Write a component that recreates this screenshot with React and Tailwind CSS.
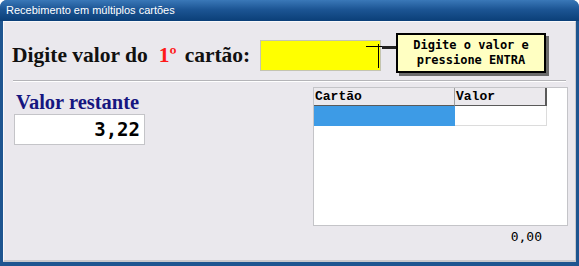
export default function App() {
  return (
    <div className="w-[579px] h-[266px] flex flex-col rounded-t-[7px] bg-[#1e5590] overflow-hidden" style={{ fontFamily: "'Liberation Sans', sans-serif" }}>
      {/* title bar */}
      <div className="h-[21px] shrink-0 flex items-center pl-[6px] text-[11px] text-white bg-[linear-gradient(#3a78b8,#1c5594_45%,#0b3f78)]">
        Recebimento em múltiplos cartões
      </div>

      {/* client area */}
      <div className="flex-1 ml-[3px] mr-[3px] mb-[4px] bg-[#eae8ed] border-l border-t border-[#f8f8fa] border-r border-b-2 border-r-[#c8c8cc] border-b-[#c8c8cc] flex flex-col">
        {/* prompt row */}
        <div className="relative flex items-center h-[58px] pl-[8px] pt-[8px]">
          <div className="flex items-baseline font-bold text-[21.5px] text-[#111]" style={{ fontFamily: "'Liberation Serif', serif" }}>
            <span>Digite valor do</span>
            <span className="ml-[11px] text-[#ff1a1a]">1º</span>
            <span className="ml-[8px]">cartão:</span>
          </div>
          <div className="ml-[10px] w-[121px] h-[31px] bg-[#ffff00] border border-[#c4c4b0]" />

          {/* tooltip */}
          <div className="absolute left-[362px] top-[24px] w-[30px] h-[1px] bg-black" />
          <div className="absolute left-[374px] top-[22px] w-[1px] h-[24px] bg-black" />
          <div className="absolute left-[378px] top-[24px] w-[14px] h-[3px] bg-[#222]" />
          <div className="absolute left-[392px] top-[11px] w-[150px] h-[40px] bg-[#ffffc2] border-2 border-black shadow-[3px_3px_0_#6b6b6b] flex flex-col items-center justify-center leading-[15px] text-[12px] font-bold text-black" style={{ fontFamily: "'DejaVu Sans Mono', monospace" }}>
            <span>Digite o valor e</span>
            <span>pressione ENTRA</span>
          </div>
        </div>

        {/* separator */}
        <div className="mx-[9px] h-[2px] border-t border-[#b4b4b8] border-b border-b-white" />

        {/* body */}
        <div className="flex-1 flex pl-[10px]">
          <div className="w-[299px] pt-[9px]">
            <div className="font-bold text-[20.5px] leading-[22px] text-[#161680] pl-[2px]" style={{ fontFamily: "'Liberation Serif', serif" }}>
              Valor restante
            </div>
            <div className="mt-[1px] w-[131px] h-[31px] bg-white border border-[#c4c4c8] flex items-center justify-end pr-[4px] text-[19px] font-bold text-black" style={{ fontFamily: "'DejaVu Sans Mono', monospace" }}>
              3,22
            </div>
          </div>

          <div className="flex flex-col pt-[5px]">
            <div className="w-[255px] h-[139px] bg-white border border-[#c4c4c8]">
              <div className="flex h-[18px] text-[13px] font-bold text-black" style={{ fontFamily: "'Liberation Mono', monospace" }}>
                <div className="w-[141px] bg-[#ebe9ed] border-b border-b-[#5a5a5a] border-r border-r-[#a0a0a0] flex items-center pl-[1px]">Cartão</div>
                <div className="w-[92px] bg-[#ebe9ed] border-b border-b-[#5a5a5a] border-r-2 border-r-[#5a5a5a] flex items-center pl-[1px]">Valor</div>
              </div>
              <div className="flex h-[20px]">
                <div className="w-[141px] bg-[#3d9be6]" />
                <div className="w-[92px] border-r border-b border-[#dcdcdc]" />
              </div>
            </div>
            <div className="flex justify-end pr-[26px] pt-[1px] text-[13px] text-black" style={{ fontFamily: "'DejaVu Sans Mono', monospace" }}>
              0,00
            </div>
          </div>
        </div>
      </div>
    </div>
  )
}
